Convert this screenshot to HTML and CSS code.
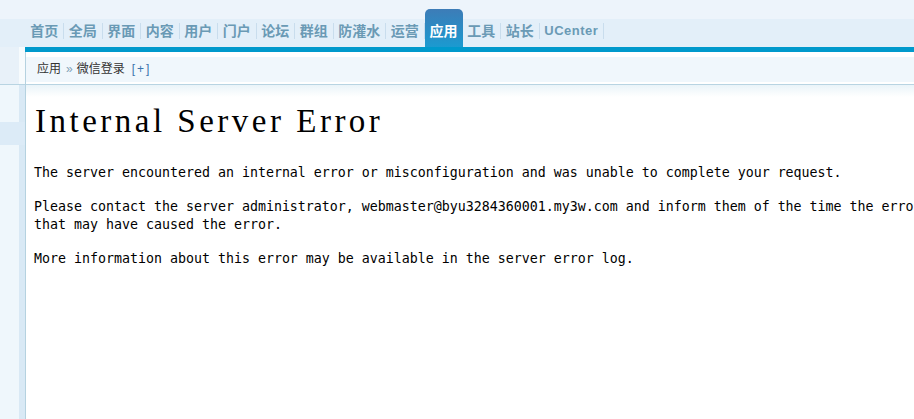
FILE: index.html
```html
<!DOCTYPE html>
<html lang="zh-CN">
<head>
    <meta charset="UTF-8">
    <title>管理中心 - 应用</title>
    <link rel="stylesheet" href="styles.css">
</head>
<body>

    <div class="header">
        <ul class="nav">
            <li><a href="#">首页</a></li>
            <li><a href="#">全局</a></li>
            <li><a href="#">界面</a></li>
            <li><a href="#">内容</a></li>
            <li><a href="#">用户</a></li>
            <li><a href="#">门户</a></li>
            <li><a href="#">论坛</a></li>
            <li><a href="#">群组</a></li>
            <li><a href="#">防灌水</a></li>
            <li><a href="#">运营</a></li>
            <li class="active"><a href="#">应用</a></li>
            <li><a href="#">工具</a></li>
            <li><a href="#">站长</a></li>
            <li><a href="#" class="latin">UCenter</a></li>
        </ul>
    </div>

    <div class="frame">
        <div class="side">
            <div class="side-top"></div>
            <div class="side-menu">
                <div class="side-gap"></div>
            </div>
        </div>

        <div class="main">
            <div class="main-bar"></div>
            <div class="main-body">
                <div class="crumb-wrap">
                    <div class="crumb">
                        应用<span class="sep">&raquo;</span>微信登录<a href="#" class="add">[+]</a>
                    </div>
                </div>
                <div class="content">
                    <div class="error">
                        <h1>Internal Server Error</h1>
                        <p>The server encountered an internal error or misconfiguration and was unable to complete your request.</p>
                        <p>Please contact the server administrator, webmaster@byu3284360001.my3w.com and inform them of the time the error occurred, and anything you might have done that may have caused the error.</p>
                        <p>More information about this error may be available in the server error log.</p>
                    </div>
                </div>
            </div>
        </div>
    </div>

</body>
</html>
```

FILE: styles.css
```css
html, body {
    height: 100%;
}
body {
    margin: 0;
    overflow: hidden;
    background: #fff;
    font-family: "Liberation Sans", "Noto Sans CJK SC", sans-serif;
    color: #333;
}
.header {
    background: #edf4fb;
    padding-top: 19px;
}
.nav {
    list-style: none;
    margin: 0;
    padding: 0 0 0 25.5px;
    height: 28px;
    background: #e3eff9;
    display: flex;
    align-items: flex-end;
}
.nav li {
    height: 28px;
    box-sizing: border-box;
    padding-top: 4px;
}
.nav a {
    display: block;
    padding: 0 4.75px;
    line-height: 16px;
    border-right: 1px solid #c9dded;
    font-size: 14px;
    font-weight: bold;
    color: #6a9ab5;
    text-decoration: none;
}
.nav a.latin {
    font-size: 13px;
    letter-spacing: 0.5px;
}
.nav li.active {
    height: 38px;
    padding-top: 14px;
    background: linear-gradient(#3d7cb7, #1b9ad0);
    border-radius: 5px 5px 0 0;
}
.nav li.active a {
    color: #fff;
    border-right: 0;
    padding: 0 5px;
}
.frame {
    display: flex;
    height: calc(100% - 47px);
}
.side {
    width: 25px;
    flex: none;
    display: flex;
    flex-direction: column;
}
.side-top {
    height: 37px;
    background: linear-gradient(to right, #e8f1f9 19px, #f7fbfd 19px);
    border-bottom: 1px solid #b8d4e2;
}
.side-menu {
    flex: 1;
    padding-top: 37px;
    background: linear-gradient(to right, #eff7fc 19px, #d9e9f5 19px);
}
.side-gap {
    height: 23px;
    background: #dcebf7;
}
.main {
    flex: 1;
    min-width: 0;
    overflow: hidden;
}
.main-bar {
    height: 5px;
    background: #0099cc;
}
.main-body {
    border-left: 1px solid #b5d2e0;
    height: calc(100% - 5px);
}
.crumb-wrap {
    padding: 5px 0 2px;
    border-bottom: 1px solid #b8d4e2;
}
.crumb {
    height: 25px;
    line-height: 25px;
    background: #f0f7fc;
    padding-left: 11px;
    font-size: 12px;
    color: #333;
}
.crumb .sep {
    color: #7f9fb6;
    margin: 0 4px 0 5px;
}
.crumb .add {
    margin-left: 7px;
    letter-spacing: 2px;
    color: #3a74ad;
    text-decoration: none;
}
.content {
    background: linear-gradient(#eaf4f9, #fff 12px);
    padding: 18px 0 0 8px;
    height: 100%;
}
.error {
    width: 1248px;
    color: #000;
}
.error h1 {
    margin: 0 0 25px;
    padding-left: 1px;
    font: normal 33px/36px "Liberation Serif", serif;
    letter-spacing: 3.5px;
}
.error p {
    margin: 16px 0;
    font: 13.29px/18px "DejaVu Sans Mono", monospace;
}
```
